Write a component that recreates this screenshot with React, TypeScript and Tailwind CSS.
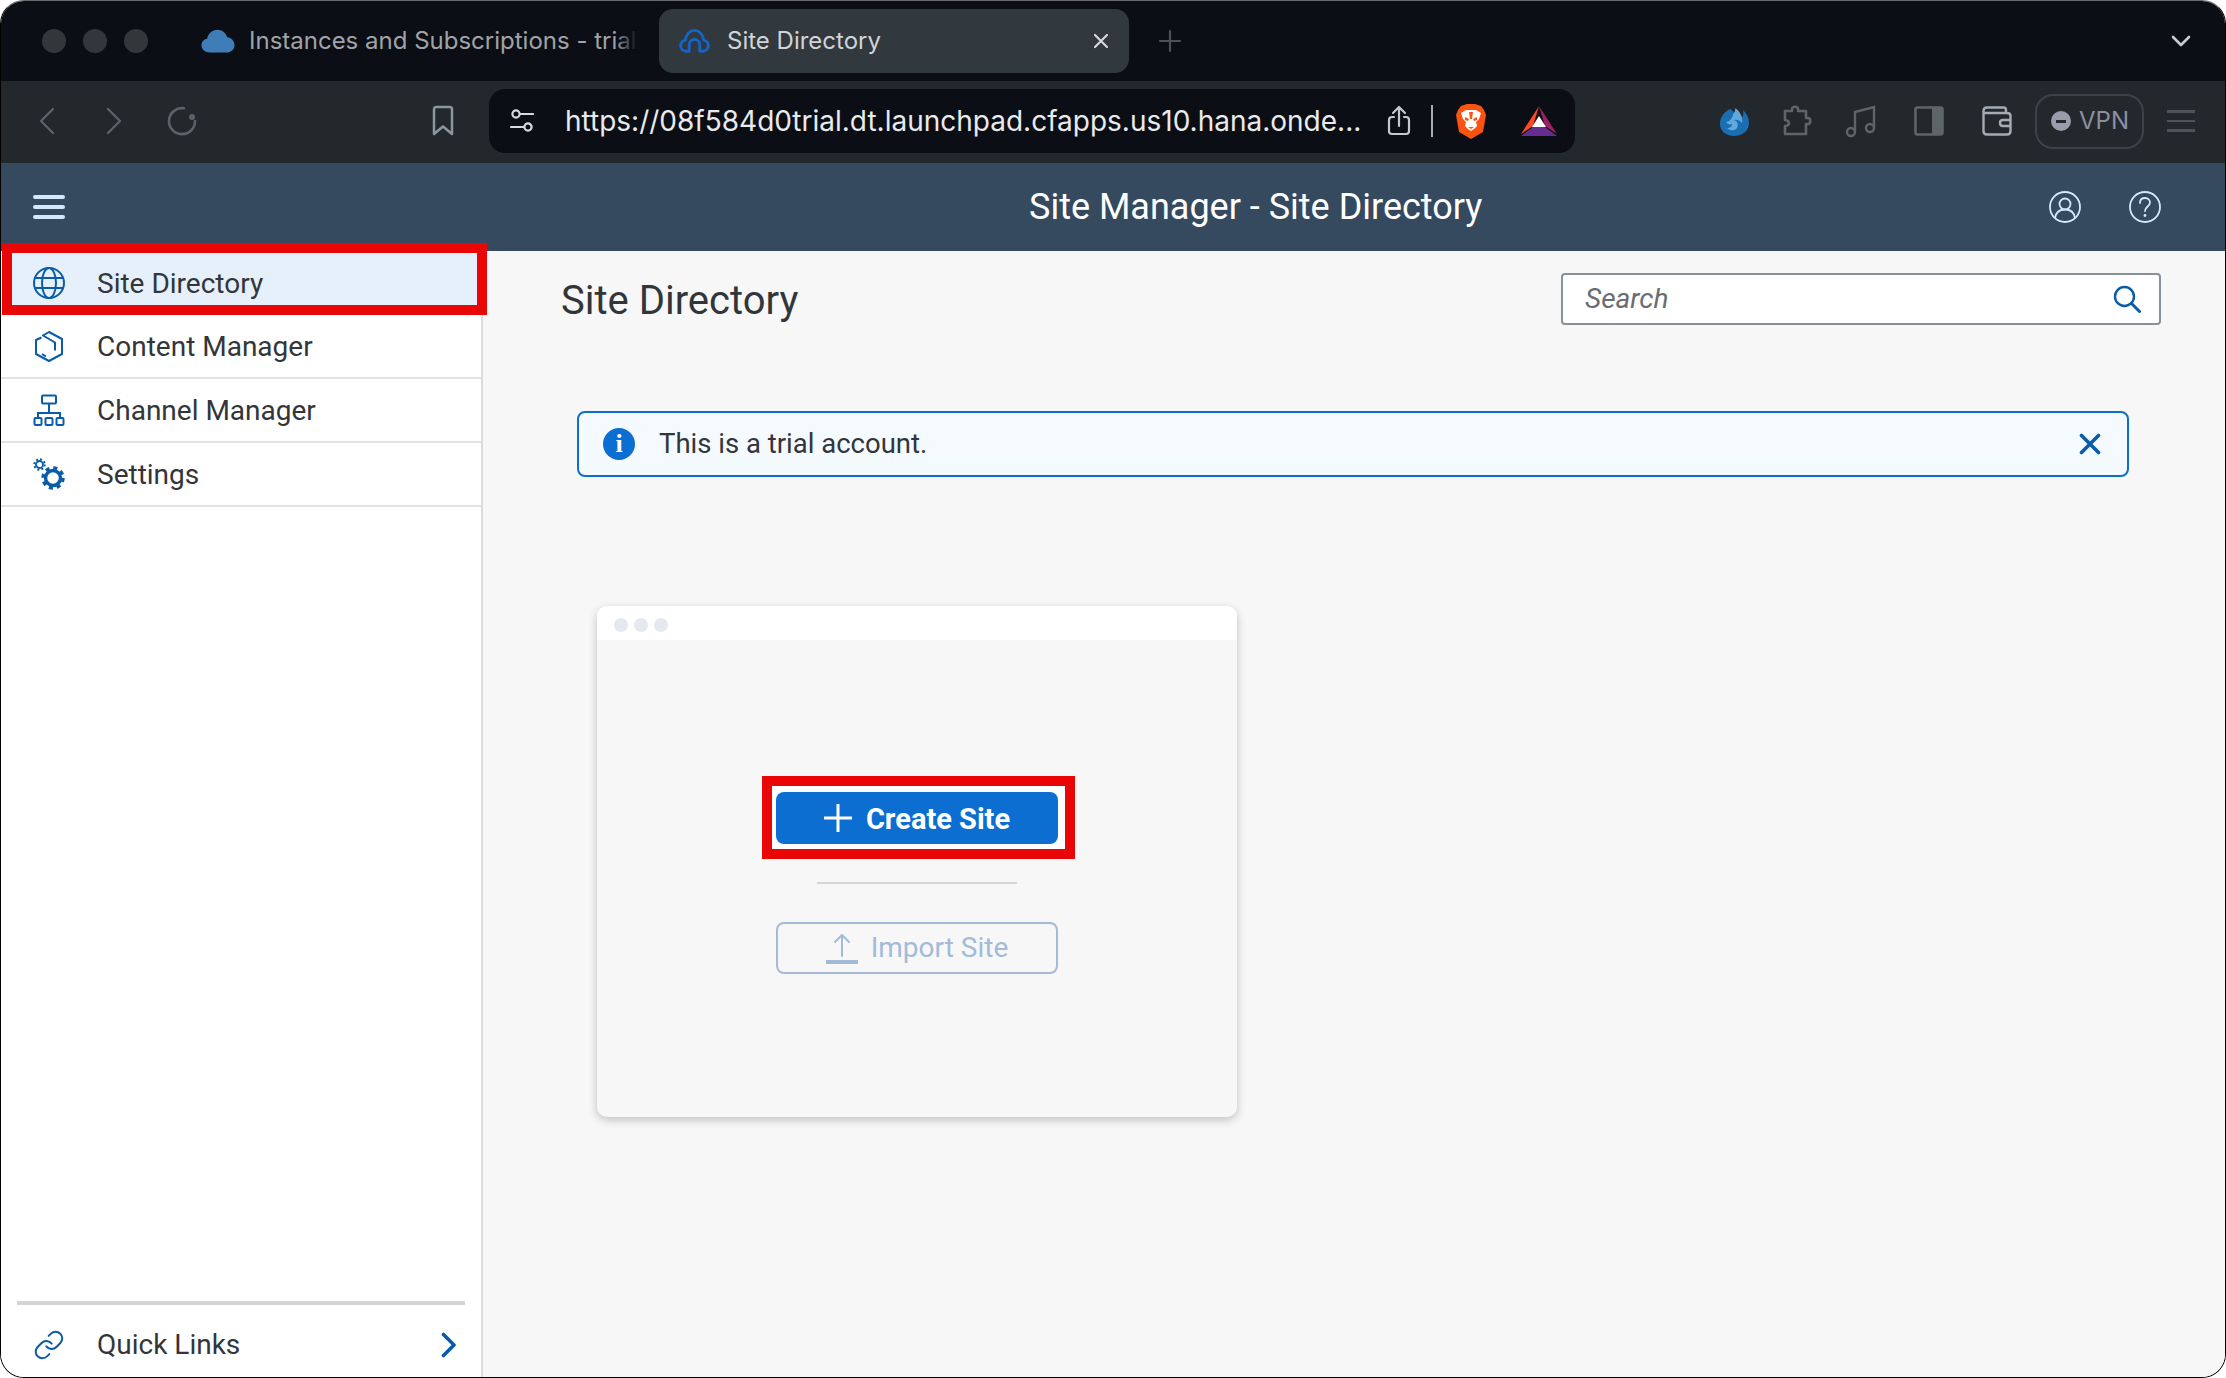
const CHROME_FONT = "font-['Inter','Liberation_Sans',sans-serif]"
const APP_FONT = "font-['Roboto','Liberation_Sans',sans-serif]"

function Cloud({ className }: { className?: string }) {
  return (
    <svg viewBox="0 0 34 24" className={className} fill="currentColor">
      <path d="M9 23.500C4 23.500.5 20.500.5 16.500c0-3.400 2.300-6 5.600-6.700C7.300 4.300 11.400.8 16.400.8c4.700 0 8.500 3 9.800 7.400 4.200.5 7.300 3.700 7.300 7.700 0 4.400-3.400 7.600-8 7.600H9Z" />
    </svg>
  )
}

function SapCloud() {
  return (
    <svg viewBox="0 0 32 26" className="h-[26px] w-[31px]" fill="none" strokeWidth="3" strokeLinecap="round" strokeLinejoin="round">
      <path d="M9 23.500H7.500C4 23.500 1.700 21 1.700 17.800c0-3 2.100-5.300 4.900-5.700C7.500 6.500 11 2 16 2s8.500 4.500 9.400 10.100c2.800.4 4.900 2.700 4.900 5.700 0 3.200-2.300 5.700-5.800 5.700H23" stroke="#1565c9" />
      <path d="M10.500 23.500v-6.500c0-3 2.400-5.500 5.500-5.500s5.500 2.500 5.500 5.500v6.500" stroke="#1565c9" />
    </svg>
  )
}

function TabBar() {
  return (
    <div className="flex h-[80px] shrink-0 items-center bg-[#0b0e14] pl-[41px] pr-[34px]">
      <div className="flex gap-[17px]">
        <span className="h-[24px] w-[24px] rounded-full bg-[#33373c]" />
        <span className="h-[24px] w-[24px] rounded-full bg-[#33373c]" />
        <span className="h-[24px] w-[24px] rounded-full bg-[#33373c]" />
      </div>
      <div className="ml-[53px] flex w-[447px] items-center">
        <Cloud className="h-[24px] w-[34px] text-[#3f7db9]" />
        <div className="relative ml-[14px] w-[389px] overflow-hidden whitespace-nowrap text-[24px] leading-[32px] text-[#a0a4a8]">
          Instances and Subscriptions - trial
          <span className="absolute inset-y-0 right-0 w-[24px] bg-linear-to-r from-transparent to-[#0b0e14]" />
        </div>
      </div>
      <div className="ml-[11px] flex h-[64px] w-[470px] items-center rounded-[14px] bg-[#31383e] px-[20px]">
        <SapCloud />
        <span className="ml-[17px] text-[24px] leading-[32px] text-[#d2d4d6]">Site Directory</span>
        <svg viewBox="0 0 16 16" className="ml-auto h-[16px] w-[16px]" stroke="#d6d8da" strokeWidth="2.200" strokeLinecap="round">
          <path d="M2 2l12 12M14 2L2 14" />
        </svg>
      </div>
      <svg viewBox="0 0 24 24" className="ml-[29px] h-[24px] w-[24px]" stroke="#4b5358" strokeWidth="2.200" strokeLinecap="round">
        <path d="M12 2v20M2 12h20" />
      </svg>
      <svg viewBox="0 0 20 12" className="ml-auto h-[12px] w-[20px]" fill="none" stroke="#c8ccd0" strokeWidth="2.600" strokeLinecap="round" strokeLinejoin="round">
        <path d="M2 2l8 8 8-8" />
      </svg>
    </div>
  )
}

function Toolbar() {
  return (
    <div className="flex h-[82px] shrink-0 items-center bg-[#23282c] pb-[2px] pl-[37px]">
      <svg viewBox="0 0 17 28" className="h-[28px] w-[17px]" fill="none" stroke="#5a6267" strokeWidth="2.400" strokeLinecap="round" strokeLinejoin="round">
        <path d="M15 2L3 14l12 12" />
      </svg>
      <svg viewBox="0 0 17 28" className="ml-[51px] h-[28px] w-[17px]" fill="none" stroke="#5a6267" strokeWidth="2.400" strokeLinecap="round" strokeLinejoin="round">
        <path d="M2 2l12 12L2 26" />
      </svg>
      <svg viewBox="0 0 30 30" className="ml-[44px] h-[30px] w-[30px]" fill="none" stroke="#5a6267" strokeWidth="2.600" strokeLinecap="round">
        <path d="M17 2.300A13 13 0 1 0 28 15" />
        <circle cx="25" cy="11" r="3" fill="#5a6267" stroke="none" />
      </svg>
      <svg viewBox="0 0 22 32" className="ml-[235px] h-[32px] w-[22px]" fill="none" stroke="#8b979d" strokeWidth="2.500" strokeLinejoin="round">
        <path d="M2 4.500C2 2.800 3 2 4.500 2h13C19 2 20 2.800 20 4.500V29l-9-7.500L2 29V4.500Z" />
      </svg>
      <div className="ml-[35px] flex h-[64px] w-[1086px] items-center rounded-[16px] bg-[#0b0e14] pl-[21px]">
        <svg viewBox="0 0 24 26" className="h-[26px] w-[24px]" fill="none" stroke="#d8dade" strokeWidth="2.200" strokeLinecap="round">
          <circle cx="6" cy="6" r="3.600" />
          <path d="M10 6h13M1 19h13" />
          <circle cx="18" cy="19" r="3.600" />
        </svg>
        <span className="ml-[31px] w-[799px] whitespace-nowrap text-[28px] leading-[36px] text-[#e9eaec]">
          https://08f584d0trial.dt.launchpad.cfapps.us10.hana.onde...
        </span>
        <svg viewBox="0 0 24 32" className="ml-[23px] h-[32px] w-[24px]" fill="none" stroke="#c5c8cc" strokeWidth="2.200" strokeLinecap="round" strokeLinejoin="round">
          <path d="M7 12H5c-2 0-3 1-3 3v11c0 2 1 3 3 3h14c2 0 3-1 3-3V15c0-2-1-3-3-3h-2M12 21V2M6 8l6-6 6 6" />
        </svg>
        <span className="ml-[20px] h-[32px] w-[2px] bg-[#a8abae]" />
        <svg viewBox="0 0 32 36" className="ml-[22px] h-[36px] w-[32px]">
          <path d="M16 36L4 29 1 12 3 7 6 3 12 1h8l6 2 3 4 2 5-3 17-12 7Z" fill="#fb5412" />
          <path d="M6 10l5-3h10l5 3-2 6-3 3 1 4-3 3-3 2-3-2-3-3 1-4-3-3-2-6Z" fill="#fff" />
          <path d="M10 14l4 2-1 2-3-1v-3ZM22 14l-4 2 1 2 3-1v-3ZM14 9h4l-1 7h-2l-1-7ZM13 24h6l-3 2-3-2Z" fill="#fb5412" />
        </svg>
        <svg viewBox="0 0 38 32" className="ml-[33px] h-[32px] w-[38px]">
          <polygon points="19,1 1,29 13,21" fill="#ff4724" />
          <polygon points="19,1 37,29 25,21" fill="#9e1f63" />
          <polygon points="1,31 37,31 25,22 13,22" fill="#662d91" />
          <polygon points="19,11 12,22 26,22" fill="#fff" />
        </svg>
      </div>
      <svg viewBox="0 0 32 32" className="ml-[144px] h-[32px] w-[32px]">
        <path d="M11 4C5 7 1 12 1 19c0 7 6 12 14 12s15-5 15-13c0-5-2-9-6-13 1 4 0 7-2 9-2-2-5-3-8-2 2-3 1-6-3-8Z" fill="#1c6eb3" />
        <path d="M16 3c6 4 8 10 7 15-2-3-5-4-8-3 3 1 5 4 3 8-2 3-7 3-10 0 3 0 5-1 5-4-2 1-5 0-6-2 3 0 6-3 7-7 1-3 3-4 2-7Z" fill="#5fa9dd" />
      </svg>
      <svg viewBox="0 0 32 32" className="ml-[29px] h-[32px] w-[32px]" fill="none" stroke="#5d6569" strokeWidth="2.600" strokeLinejoin="round">
        <path d="M5 6h7V4c0-3 6-3 6 0v2h8v7h2c3 0 3 6 0 6h-2v10H5v-8c3 0 4-2 4-3s-1-3-4-3V6Z" />
      </svg>
      <svg viewBox="0 0 32 34" className="ml-[33px] h-[34px] w-[32px]" fill="none" stroke="#5d6569" strokeWidth="2.400">
        <circle cx="6" cy="28" r="4" />
        <circle cx="25" cy="24" r="4" />
        <path d="M10 28V8l19-5v21" />
      </svg>
      <svg viewBox="0 0 30 30" className="ml-[37px] h-[30px] w-[30px]">
        <rect x="1.500" y="1.500" width="27" height="27" rx="2" fill="none" stroke="#5d6569" strokeWidth="2.600" />
        <rect x="18" y="2" width="10" height="26" fill="#5d6569" />
      </svg>
      <svg viewBox="0 0 30 30" className="ml-[38px] h-[30px] w-[30px]" fill="none" stroke="#a3acb2" strokeWidth="2.400" strokeLinejoin="round">
        <path d="M24 7V4c0-1.500-1-2.500-2.500-2.500H5C3 1.500 1.500 3 1.500 5v20c0 2 1.500 3.500 3.500 3.500h20c2 0 3.500-1.500 3.500-3.500V10c0-2-1.500-3-3.500-3H2" />
        <path d="M28 14h-7c-1.500 0-3 1-3 3s1.500 3 3 3h7" />
      </svg>
      <div className="ml-[23px] flex h-[55px] w-[109px] items-center rounded-[18px] border-2 border-[#3c4348] pl-[14px]">
        <span className="flex h-[20px] w-[20px] items-center justify-center rounded-full bg-[#9a9bab]">
          <span className="h-[3px] w-[10px] bg-[#23282c]" />
        </span>
        <span className="ml-[8px] text-[24px] leading-[30px] text-[#8d8fa0]">VPN</span>
      </div>
      <div className="ml-[23px] flex w-[28px] flex-col gap-[7px]">
        <span className="h-[2.500px] bg-[#4d5459]" />
        <span className="h-[2.500px] bg-[#4d5459]" />
        <span className="h-[2.500px] bg-[#4d5459]" />
      </div>
    </div>
  )
}

function Header() {
  return (
    <div className="relative flex h-[88px] shrink-0 items-center bg-[#354a5f] pl-[32px] pr-[64px]">
      <div className="flex w-[32px] flex-col gap-[6px]">
        <span className="h-[4px] rounded-full bg-[#d1e8ff]" />
        <span className="h-[4px] rounded-full bg-[#d1e8ff]" />
        <span className="h-[4px] rounded-full bg-[#d1e8ff]" />
      </div>
      <span className={`ml-[964px] whitespace-nowrap text-[36px] leading-[48px] text-white ${APP_FONT}`}>
        Site Manager - Site Directory
      </span>
      <svg viewBox="0 0 32 32" className="ml-auto h-[32px] w-[32px]" fill="none" stroke="#d1e8ff" strokeWidth="1.800">
        <circle cx="16" cy="16" r="15" />
        <circle cx="16" cy="13" r="5.500" />
        <path d="M6 27c1-6 5-8.500 10-8.500S25 21 26 27" />
      </svg>
      <svg viewBox="0 0 32 32" className="ml-[48px] h-[32px] w-[32px]" fill="none" stroke="#d1e8ff" strokeWidth="1.800" strokeLinecap="round">
        <circle cx="16" cy="16" r="15" />
        <path d="M11 12c0-3 2-5 5-5s5 2 5 4.500c0 4-5 4-5 8.500" />
        <circle cx="16" cy="24.500" r="1.400" fill="#d1e8ff" stroke="none" />
      </svg>
    </div>
  )
}

const ICON = { viewBox: "0 0 32 32", className: "h-[32px] w-[32px] shrink-0", fill: "none", stroke: "#0a5cab", strokeWidth: 2 }

function GlobeIcon() {
  return (
    <svg {...ICON}>
      <circle cx="16" cy="16" r="15" />
      <ellipse cx="16" cy="16" rx="7" ry="15" />
      <path d="M2 11h28M2 21h28" />
    </svg>
  )
}

function ContentIcon() {
  return (
    <svg {...ICON} strokeLinejoin="round">
      <path d="M8.500 7.500L3 10v14l13 7 13-7V9L16 2l-6 3.500 12 7v8" />
      <path d="M9 24l4 2.500" />
    </svg>
  )
}

function ChannelIcon() {
  return (
    <svg {...ICON}>
      <rect x="9" y="1.500" width="14" height="8" rx="1" />
      <path d="M16 9.500V20M5 23v-4h22v4" />
      <rect x="1.500" y="24" width="7" height="7" rx="1" />
      <rect x="12.500" y="24" width="7" height="7" rx="1" />
      <rect x="23.500" y="24" width="7" height="7" rx="1" />
    </svg>
  )
}

function SettingsIcon() {
  return (
    <svg {...ICON}>
      <circle cx="20" cy="20" r="7.500" strokeWidth="3.500" />
      <circle cx="20" cy="20" r="10" strokeWidth="3.500" strokeDasharray="4 3.850" />
      <circle cx="6.500" cy="6.500" r="3.500" strokeWidth="1.800" />
      <circle cx="6.500" cy="6.500" r="5.200" strokeWidth="2" strokeDasharray="2 2.080" />
    </svg>
  )
}

function LinkIcon() {
  return (
    <svg viewBox="0 0 24 24" className="h-[32px] w-[32px] shrink-0" fill="none" stroke="#0a5cab" strokeWidth="1.500" strokeLinecap="round">
      <path d="M10 13a5 5 0 0 0 7.540.54l3-3a5 5 0 0 0-7.070-7.070l-1.720 1.710" />
      <path d="M14 11a5 5 0 0 0-7.540-.54l-3 3a5 5 0 0 0 7.070 7.070l1.710-1.710" />
    </svg>
  )
}

const NAV = [
  { label: "Content Manager", icon: ContentIcon },
  { label: "Channel Manager", icon: ChannelIcon },
  { label: "Settings", icon: SettingsIcon },
]

function Sidebar() {
  return (
    <aside className={`flex w-[482px] shrink-0 flex-col border-r-2 border-[#dcdcdc] bg-white text-[28px] text-[#32363a] ${APP_FONT}`}>
      <div className="relative flex h-[64px] items-center bg-[#e5f0fa] pl-[32px]">
        <GlobeIcon />
        <span className="ml-[32px] pt-[2px] leading-[40px]">Site Directory</span>
        <span className="absolute -top-[8px] left-[1px] z-10 h-[72px] w-[485px] border-[10px] border-[#e90606]" />
      </div>
      {NAV.map((n) => (
        <div key={n.label} className="flex h-[64px] items-center border-b-2 border-[#e4e4e4] pl-[32px]">
          <n.icon />
          <span className="ml-[32px] pt-[2px] leading-[40px]">{n.label}</span>
        </div>
      ))}
      <div className="mt-auto px-[16px]">
        <div className="h-[4px] bg-[#d5d5d5]" />
      </div>
      <div className="flex h-[72px] items-center pl-[32px] pr-[24px] pt-[8px]">
        <LinkIcon />
        <span className="ml-[32px] leading-[40px]">Quick Links</span>
        <svg viewBox="0 0 16 26" className="ml-auto h-[26px] w-[16px]" fill="none" stroke="#0a5cab" strokeWidth="3.600" strokeLinecap="round" strokeLinejoin="round">
          <path d="M2.500 2.500L13 13 2.500 23.500" />
        </svg>
      </div>
    </aside>
  )
}

function SiteCard() {
  return (
    <div className="ml-[114px] mt-[129px] h-[511px] w-[640px] overflow-hidden rounded-[10px] bg-[#f7f7f7] shadow-[0_3px_10px_rgba(0,0,0,0.22)]">
      <div className="flex h-[34px] items-center gap-[6px] bg-white pl-[17px] pt-[4px]">
        <span className="h-[14px] w-[14px] rounded-full bg-[#e4e9f1]" />
        <span className="h-[14px] w-[14px] rounded-full bg-[#e4e9f1]" />
        <span className="h-[14px] w-[14px] rounded-full bg-[#e4e9f1]" />
      </div>
      <div className="flex flex-col items-center pt-[152px]">
        <div className="relative h-[52px] w-[282px]">
          <span className="absolute -left-[14px] -top-[16px] h-[83px] w-[313px] border-[10px] border-[#e90606] bg-white" />
          <button className="relative flex h-[52px] w-[282px] items-center justify-center rounded-[8px] bg-[#0c6ed1] text-[29px] font-bold text-white">
            <svg viewBox="0 0 28 28" className="h-[28px] w-[28px]" stroke="#fff" strokeWidth="3">
              <path d="M14 0v28M0 14h28" />
            </svg>
            <span className="ml-[14px] pt-[2px] leading-[40px]">Create Site</span>
          </button>
        </div>
        <div className="mt-[38px] h-[2px] w-[200px] bg-[#d5d5d5]" />
        <button className="mt-[38px] flex h-[52px] w-[282px] items-center justify-center rounded-[8px] border-2 border-[#a3bbd8] text-[28px] text-[#a3bbd8]">
          <svg viewBox="0 0 32 32" className="h-[32px] w-[32px]" fill="none" stroke="#a3bbd8" strokeWidth="2" strokeLinecap="round" strokeLinejoin="round">
            <path d="M16 24V3M9 10l7-7 7 7" />
            <path d="M1 30h30" strokeWidth="4" />
          </svg>
          <span className="ml-[13px] leading-[40px]">Import Site</span>
        </button>
      </div>
    </div>
  )
}

function Main() {
  return (
    <main className={`min-w-0 flex-1 bg-[#f7f7f7] ${APP_FONT}`}>
      <div className="flex items-start justify-between pl-[78px] pr-[64px] pt-[22px]">
        <h1 className="pt-[2px] text-[40px] leading-[52px] text-[#32363a]">Site Directory</h1>
        <div className="flex h-[52px] w-[600px] items-center rounded-[4px] border-2 border-[#89919a] bg-white pl-[22px] pr-[18px]">
          <span className="text-[28px] italic text-[#6a6d70]">Search</span>
          <svg viewBox="0 0 28 28" className="ml-auto h-[28px] w-[28px]" fill="none" stroke="#0a5cab" strokeWidth="2.400" strokeLinecap="round">
            <circle cx="11.500" cy="11.500" r="9.500" />
            <path d="M18.500 18.500L26.500 26.500" strokeWidth="3" />
          </svg>
        </div>
      </div>
      <div className="ml-[94px] mr-[96px] mt-[84px] flex h-[66px] items-center rounded-[8px] border-2 border-[#0c6ed1] bg-[#f5faff] pl-[24px] pr-[26px]">
        <span className="flex h-[32px] w-[32px] items-center justify-center rounded-full bg-[#0c6ed1] font-['Liberation_Serif',serif] text-[26px] font-bold leading-none text-white">
          i
        </span>
        <span className="ml-[24px] text-[27.500px] leading-[40px] text-[#32363a]">This is a trial account.</span>
        <svg viewBox="0 0 22 22" className="ml-auto h-[22px] w-[22px]" stroke="#0a5cab" strokeWidth="3.600" strokeLinecap="round">
          <path d="M2.500 2.500l17 17M19.500 2.500l-17 17" />
        </svg>
      </div>
      <SiteCard />
    </main>
  )
}

export default function App() {
  return (
    <div className="h-[1378px] w-[2226px] bg-white">
      <div className={`flex h-full flex-col overflow-hidden rounded-[24px] border border-black border-t-[#6a6d70] ${CHROME_FONT}`}>
        <TabBar />
        <Toolbar />
        <Header />
        <div className="flex min-h-0 flex-1">
          <Sidebar />
          <Main />
        </div>
      </div>
    </div>
  )
}
